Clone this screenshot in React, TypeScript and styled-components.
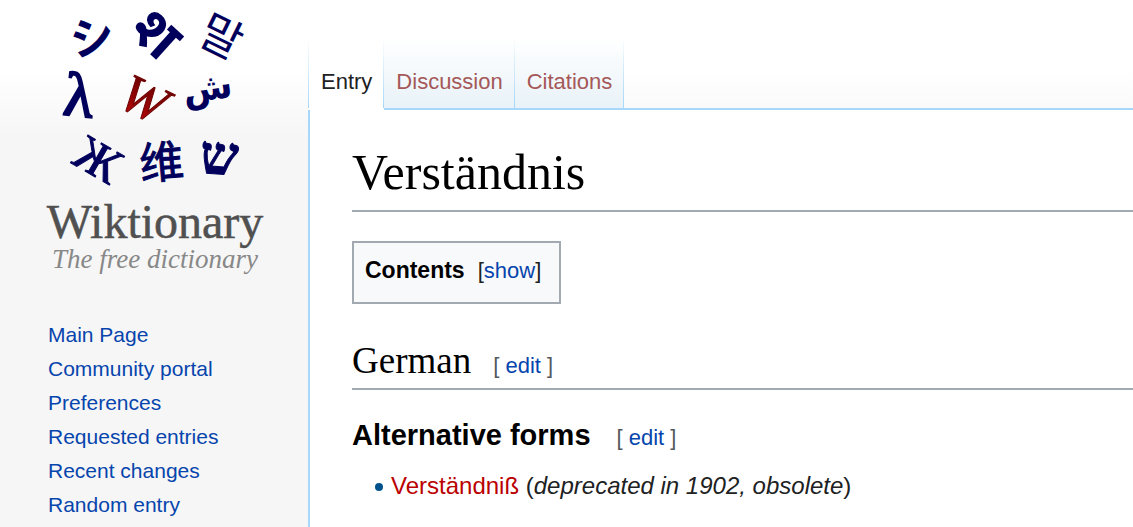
import React from 'react';
import styled, { createGlobalStyle, css } from 'styled-components';

const sans = '"Liberation Sans", Arial, sans-serif';
const serif = '"Liberation Serif", "Times New Roman", serif';
const line = '#a7d7f9';
const rule = '#a2a9b1';
const link = '#0645ad';

const GlobalStyle = createGlobalStyle`
  *, *::before, *::after { box-sizing: border-box; }
  html { background: #f6f6f6; }
  body { margin: 0; font-family: ${sans}; color: #202122; }
  a { color: ${link}; text-decoration: none; }
  a:hover { text-decoration: underline; }
`;

const Page = styled.div`
  display: flex;
  min-height: 100vh;
  background: #f6f6f6 linear-gradient(#ffffff 68px, #f6f6f6 138px) no-repeat;
`;

const Sidebar = styled.aside`
  flex: 0 0 308px;
`;

const LogoLink = styled.a`
  display: block;
`;

const LogoSvg = styled.svg`
  display: block;
  width: 308px;
  height: 290px;
  overflow: visible;
`;

const SideNav = styled.ul`
  list-style: none;
  margin: 0;
  padding: 33px 0 0 48px;
`;

const SideItem = styled.li`
  font-size: 21px;
  line-height: 24px;
  padding-bottom: 10px;
  &:last-child { padding-bottom: 0; }
`;

const Main = styled.div`
  flex: 1;
  min-width: 0;
  display: flex;
  flex-direction: column;
`;

const TabBar = styled.nav`
  display: flex;
  padding-top: 38px;
`;

const divider = `linear-gradient(rgba(167, 215, 249, 0), ${line})`;

const Tab = styled.a<{ $active?: boolean }>`
  height: 72px;
  padding: 31px 12px 0;
  font-size: 22px;
  line-height: 26px;
  border-bottom: 2px solid ${line};
  color: #a55858;
  background:
    ${divider} right / 1px 100% no-repeat,
    linear-gradient(#ffffff, #e8f2f8);
  ${p => p.$active && css`
    color: #202122;
    padding-left: 13px;
    border-bottom-color: #ffffff;
    background:
      ${divider} left / 1px 100% no-repeat,
      ${divider} right / 1px 100% no-repeat,
      #ffffff;
  `}
`;

const TabFill = styled.div`
  flex: 1;
  border-bottom: 2px solid ${line};
`;

const Content = styled.main`
  flex: 1;
  padding: 32px 0 0 42px;
  background: #ffffff;
  border-left: 2px solid ${line};
`;

const Title = styled.h1`
  margin: 0;
  padding-bottom: 8px;
  font: 400 50px/60px ${serif};
  color: #000000;
  border-bottom: 2px solid ${rule};
`;

const Contents = styled.section`
  display: inline-flex;
  align-items: baseline;
  gap: 13px;
  margin-top: 29px;
  padding: 14px 18px 18px 11px;
  background: #f8f9fa;
  border: 2px solid ${rule};
  line-height: 26px;
`;

const ContentsTitle = styled.h2`
  margin: 0;
  font-size: 23px;
  color: #000000;
`;

const Toggle = styled.span`
  font-size: 22px;
`;

const ToggleButton = styled.button`
  padding: 0;
  border: 0;
  background: none;
  font: inherit;
  color: ${link};
  cursor: pointer;
`;

const headingRow = css`
  display: flex;
  align-items: baseline;
  margin: 0;
  color: #000000;
`;

const LanguageHeading = styled.h2`
  ${headingRow}
  gap: 22px;
  margin-top: 36px;
  padding-bottom: 6px;
  font: 400 37px/42px ${serif};
  border-bottom: 2px solid ${rule};
`;

const SectionHeading = styled.h3`
  ${headingRow}
  gap: 26px;
  margin-top: 25px;
  font: 700 29px/40px ${sans};
`;

const EditSection = styled.span`
  font: 400 22px/26px ${sans};
  color: #54595d;
`;

const Forms = styled.ul`
  list-style: none;
  margin: 15px 0 0;
  padding: 0 0 0 23px;
`;

const Form = styled.li`
  display: flex;
  align-items: center;
  gap: 8px;
  font-size: 24px;
  line-height: 32px;
  &::before {
    content: '';
    width: 8px;
    height: 8px;
    margin-top: 2px;
    border-radius: 50%;
    background: #00528c;
  }
`;

const RedLink = styled.a`
  color: #ba0000;
`;

const glyphs = [
  { ch: 'シ', x: 95, y: 53, r: -10, size: 44, font: '"Noto Sans CJK JP"', weight: 700, stroke: 0 },
  { ch: 'श', x: 143, y: 48, r: 42, size: 58, font: '"Noto Sans"', weight: 700, stroke: 0 },
  { ch: '말', x: 214, y: 51, r: 26, size: 45, font: '"Noto Sans CJK KR"', weight: 400, stroke: 0 },
  { ch: 'λ', x: 77, y: 116, r: 6, size: 62, font: '"Liberation Serif"', weight: 400, stroke: 2 },
  { ch: 'ش', x: 209, y: 100, r: -8, size: 36, font: '"DejaVu Sans"', weight: 700, stroke: 0 },
  { ch: 'Ж', x: 90, y: 174, r: 30, size: 50, font: '"Liberation Serif"', weight: 400, stroke: 1 },
  { ch: '维', x: 163, y: 178, r: -5, size: 44, font: '"Noto Sans CJK SC"', weight: 400, stroke: 1 },
  { ch: 'ש', x: 218, y: 174, r: 4, size: 54, font: '"Liberation Serif"', weight: 700, stroke: 1 },
];

const Logo = () => (
  <LogoSvg viewBox="0 0 308 290" role="img" aria-label="Wiktionary, the free dictionary">
    <defs>
      <linearGradient id="red" x1="0" y1="0" x2="0" y2="1">
        <stop offset="0" stopColor="#5c0000" />
        <stop offset="1" stopColor="#c00808" />
      </linearGradient>
    </defs>
    <g textAnchor="middle" fill="#00005c" stroke="#00005c">
      {glyphs.map(g => (
        <text
          key={g.ch}
          transform={`translate(${g.x} ${g.y}) rotate(${g.r})`}
          fontFamily={`${g.font}, sans-serif`}
          fontSize={g.size}
          fontWeight={g.weight}
          strokeWidth={g.stroke}
        >
          {g.ch}
        </text>
      ))}
      <text
        transform="translate(136 115) rotate(26)"
        fontFamily={serif}
        fontSize="54"
        fontStyle="italic"
        fill="url(#red)"
        stroke="#6c0000"
        strokeWidth="1"
      >
        W
      </text>
    </g>
    <g textAnchor="middle" fontFamily={serif}>
      <text x="155" y="238" fontSize="48" fill="#505050" stroke="#505050" strokeWidth="0.5">Wiktionary</text>
      <text x="155" y="268" fontSize="27" fontStyle="italic" fill="#888888">The free dictionary</text>
    </g>
  </LogoSvg>
);

const sideLinks = [
  'Main Page',
  'Community portal',
  'Preferences',
  'Requested entries',
  'Recent changes',
  'Random entry',
];

const Edit = () => (
  <EditSection>[ <a href="#edit">edit</a> ]</EditSection>
);

export default function App() {
  return (
    <>
      <GlobalStyle />
      <Page>
        <Sidebar>
          <LogoLink href="#main"><Logo /></LogoLink>
          <SideNav>
            {sideLinks.map(t => (
              <SideItem key={t}><a href="#nav">{t}</a></SideItem>
            ))}
          </SideNav>
        </Sidebar>
        <Main>
          <TabBar>
            <Tab href="#entry" $active>Entry</Tab>
            <Tab href="#discussion">Discussion</Tab>
            <Tab href="#citations">Citations</Tab>
            <TabFill />
          </TabBar>
          <Content>
            <Title>Verständnis</Title>
            <Contents>
              <ContentsTitle>Contents</ContentsTitle>
              <Toggle>[<ToggleButton type="button">show</ToggleButton>]</Toggle>
            </Contents>
            <LanguageHeading>German <Edit /></LanguageHeading>
            <SectionHeading>Alternative forms <Edit /></SectionHeading>
            <Forms>
              <Form>
                <span>
                  <RedLink href="#form">Verständniß</RedLink> (<i>deprecated in 1902, obsolete</i>)
                </span>
              </Form>
            </Forms>
          </Content>
        </Main>
      </Page>
    </>
  );
}
